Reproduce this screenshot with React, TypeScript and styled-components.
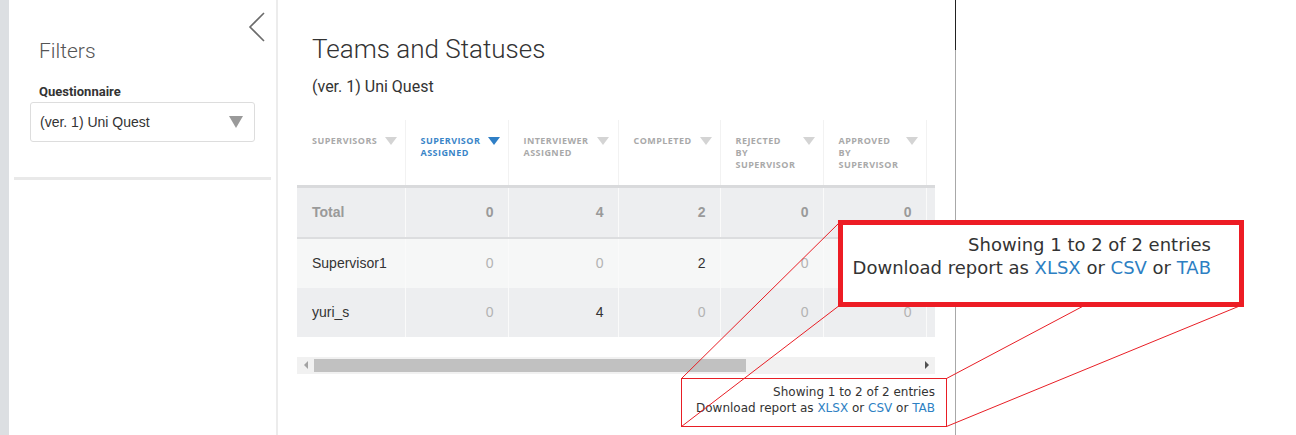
import React from "react";
import styled, { createGlobalStyle } from "styled-components";

const Global = createGlobalStyle`
  html, body { margin: 0; padding: 0; background: #fff; }
  body { width: 1296px; height: 435px; overflow: hidden; font-family: "Liberation Sans", Arial, sans-serif; color: #333; }
`;

const Page = styled.div`
  position: relative;
  display: flex;
  width: 1296px;
  height: 435px;
  overflow: hidden;
`;

const Strip = styled.div`
  width: 9px;
  flex: none;
  background: #dcdfe2;
`;

const Sidebar = styled.aside`
  width: 267px;
  flex: none;
  display: flex;
  flex-direction: column;
  border-right: 2px solid #ececec;
`;

const SideHead = styled.div`
  position: relative;
  padding: 37px 21px 0 21px;
`;

const Collapse = styled.div`
  position: absolute;
  top: 12px;
  right: 10px;
  width: 18px;
  height: 30px;
`;

const FiltersTitle = styled.h2`
  margin: 0 0 0 9px;
  font-family: Roboto, sans-serif;
  font-weight: 300;
  font-size: 21px;
  line-height: 28px;
  color: #555;
`;

const Label = styled.div`
  margin: 19px 0 0 9px;
  font-family: Roboto, "Liberation Sans", sans-serif;
  font-weight: 700;
  font-size: 13px;
  line-height: 16px;
  color: #333;
`;

const Select = styled.div`
  margin-top: 2px;
  height: 40px;
  box-sizing: border-box;
  border: 1px solid #ddd;
  border-radius: 3px;
  display: flex;
  align-items: center;
  justify-content: space-between;
  padding: 0 11px 0 9px;
  font-size: 14px;
  color: #333;
`;

const Caret = styled.span<{ $color: string; $w?: number; $h?: number }>`
  display: inline-block;
  flex: none;
  width: 0;
  height: 0;
  border-left: ${(p) => (p.$w ?? 12) / 2}px solid transparent;
  border-right: ${(p) => (p.$w ?? 12) / 2}px solid transparent;
  border-top: ${(p) => p.$h ?? 7}px solid ${(p) => p.$color};
`;

const SideDivider = styled.div`
  margin: 35px 5px 0 5px;
  height: 3px;
  background: #e9e9e9;
`;

const Main = styled.main`
  width: 677px;
  flex: none;
  padding: 33px 0 0 19px;
  box-sizing: border-box;
`;

const Title = styled.h1`
  margin: 0 0 0 15px;
  font-family: Roboto, sans-serif;
  font-weight: 300;
  font-size: 26px;
  line-height: 32px;
  color: #333;
`;

const Sub = styled.div`
  margin: 11px 0 0 15px;
  font-family: Roboto, sans-serif;
  font-size: 16px;
  line-height: 22px;
  color: #333;
`;

const Scroller = styled.div`
  margin-top: 22px;
  width: 638px;
  overflow: hidden;
`;

const Table = styled.table`
  border-collapse: collapse;
  table-layout: fixed;
  width: 1000px;
`;

const Th = styled.th`
  padding: 15px 10px 0 15px;
  height: 66px;
  box-sizing: border-box;
  vertical-align: top;
  text-align: left;
  border-left: 1px solid #f2f2f2;
  border-bottom: 3px solid #d9dadc;
  &:first-child { border-left: none; }
`;

const HeadInner = styled.div<{ $active?: boolean }>`
  display: flex;
  align-items: flex-start;
  justify-content: space-between;
  gap: 8px;
  font-family: "Open Sans", sans-serif;
  font-weight: 700;
  font-size: 9px;
  line-height: 12px;
  letter-spacing: 0.45px;
  text-transform: uppercase;
  color: ${(p) => (p.$active ? "#3a85c8" : "#a9a9a9")};
  & > span:last-child { margin-top: 2px; }
`;

const Row = styled.tr<{ $bg: string; $border?: boolean }>`
  background: ${(p) => p.$bg};
  border-bottom: ${(p) => (p.$border ? "2px solid #dcdddf" : "none")};
`;

const Td = styled.td<{ $bold?: boolean; $num?: boolean; $muted?: boolean }>`
  height: 49px;
  padding: 0 14px 0 15px;
  border-left: 1px solid #fafafa;
  font-size: 14px;
  font-weight: ${(p) => (p.$bold ? 700 : 400)};
  text-align: ${(p) => (p.$num ? "right" : "left")};
  color: ${(p) => (p.$bold ? "#9a9a9a" : p.$muted ? "#b3b3b3" : "#333")};
  white-space: nowrap;
  &:first-child { border-left: none; }
`;

const ScrollBar = styled.div`
  margin-top: 20px;
  width: 638px;
  height: 17px;
  background: #f1f1f1;
  display: flex;
  align-items: center;
`;

const ScrollArrow = styled.div<{ $dir: "l" | "r"; $color: string }>`
  width: 17px;
  height: 17px;
  flex: none;
  display: flex;
  align-items: center;
  justify-content: center;
  &::before {
    content: "";
    width: 0;
    height: 0;
    border-top: 4px solid transparent;
    border-bottom: 4px solid transparent;
    ${(p) => (p.$dir === "l" ? `border-right: 4px solid ${p.$color};` : `border-left: 4px solid ${p.$color};`)}
  }
`;

const Thumb = styled.div`
  width: 432px;
  height: 13px;
  background: #c1c1c1;
`;

const Track = styled.div`
  flex: 1;
`;

const Footer = styled.div<{ $size: number; $lh: number }>`
  font-family: "DejaVu Sans", Verdana, sans-serif;
  font-size: ${(p) => p.$size}px;
  line-height: ${(p) => p.$lh}px;
  color: #333;
  text-align: right;
  white-space: nowrap;
`;

const SmallFooter = styled(Footer)`
  margin-top: 10px;
  width: 638px;
`;

const Link = styled.a`
  color: #2d7fc3;
  text-decoration: none;
`;

const Edge = styled.div`
  width: 1px;
  flex: none;
  background: linear-gradient(#222 0 50px, #a8a8a8 50px);
`;

const Overlay = styled.svg`
  position: absolute;
  left: 0;
  top: 0;
  pointer-events: none;
`;

const Callout = styled.div`
  position: absolute;
  left: 838px;
  top: 220px;
  width: 406px;
  height: 87px;
  box-sizing: border-box;
  border: 5px solid #ed1c24;
  background: #fff;
  padding: 8px 28px 0 0;
`;

const cols = [
  { label: "Supervisors", w: 108 },
  { label: "Supervisor assigned", w: 103, active: true },
  { label: "Interviewer assigned", w: 110 },
  { label: "Completed", w: 102 },
  { label: "Rejected by Supervisor", w: 103 },
  { label: "Approved by Supervisor", w: 103 },
  { label: "Answered", w: 120 },
  { label: "", w: 251 },
];

const rows = [
  { name: "Total", vals: [0, 4, 2, 0, 0, 0], bold: true, bg: "#edeef0", border: true },
  { name: "Supervisor1", vals: [0, 0, 2, 0, 0, 0], bg: "#f6f7f7" },
  { name: "yuri_s", vals: [0, 4, 0, 0, 0, 0], bg: "#edeef0" },
];

function FooterText() {
  return (
    <>
      <div>Showing 1 to 2 of 2 entries</div>
      <div>
        Download report as <Link href="#">XLSX</Link> or <Link href="#">CSV</Link> or <Link href="#">TAB</Link>
      </div>
    </>
  );
}

export default function App() {
  return (
    <Page>
      <Global />
      <Strip />
      <Sidebar>
        <SideHead>
          <Collapse>
            <svg width="18" height="30" viewBox="0 0 18 30">
              <path d="M16 1 L2 15 L16 29" fill="none" stroke="#6b6b6b" strokeWidth="1.6" />
            </svg>
          </Collapse>
          <FiltersTitle>Filters</FiltersTitle>
          <Label>Questionnaire</Label>
          <Select>
            <span>(ver. 1) Uni Quest</span>
            <Caret $color="#9a9a9a" $w={14} $h={12} />
          </Select>
        </SideHead>
        <SideDivider />
      </Sidebar>
      <Main>
        <Title>Teams and Statuses</Title>
        <Sub>(ver. 1) Uni Quest</Sub>
        <Scroller>
          <Table>
            <colgroup>
              {cols.map((c, i) => (
                <col key={i} style={{ width: c.w }} />
              ))}
            </colgroup>
            <thead>
              <tr>
                {cols.map((c, i) => (
                  <Th key={i}>
                    {c.label && (
                      <HeadInner $active={c.active}>
                        <span>{c.label}</span>
                        <Caret $color={c.active ? "#2f7fc6" : "#d4d4d4"} $w={12} $h={8} />
                      </HeadInner>
                    )}
                  </Th>
                ))}
              </tr>
            </thead>
            <tbody>
              {rows.map((r) => (
                <Row key={r.name} $bg={r.bg} $border={r.border}>
                  <Td $bold={r.bold}>{r.name}</Td>
                  {r.vals.map((v, i) => (
                    <Td key={i} $num $bold={r.bold} $muted={v === 0}>
                      {v}
                    </Td>
                  ))}
                  <Td />
                </Row>
              ))}
            </tbody>
          </Table>
        </Scroller>
        <ScrollBar>
          <ScrollArrow $dir="l" $color="#a3a3a3" />
          <Thumb />
          <Track />
          <ScrollArrow $dir="r" $color="#505050" />
        </ScrollBar>
        <SmallFooter $size={12} $lh={16}>
          <FooterText />
        </SmallFooter>
      </Main>
      <Edge />
      <Overlay width="1296" height="435" viewBox="0 0 1296 435">
        <g stroke="#e81e25" strokeWidth="1" fill="none">
          <line x1="681.5" y1="378.5" x2="840" y2="222" />
          <line x1="681.5" y1="426.5" x2="840" y2="305" />
          <line x1="946.5" y1="378.5" x2="1242" y2="222" />
          <line x1="946.5" y1="426.5" x2="1242" y2="305" />
          <rect x="681.5" y="378.5" width="265" height="48" />
        </g>
      </Overlay>
      <Callout>
        <Footer $size={18} $lh={23}>
          <FooterText />
        </Footer>
      </Callout>
    </Page>
  );
}
